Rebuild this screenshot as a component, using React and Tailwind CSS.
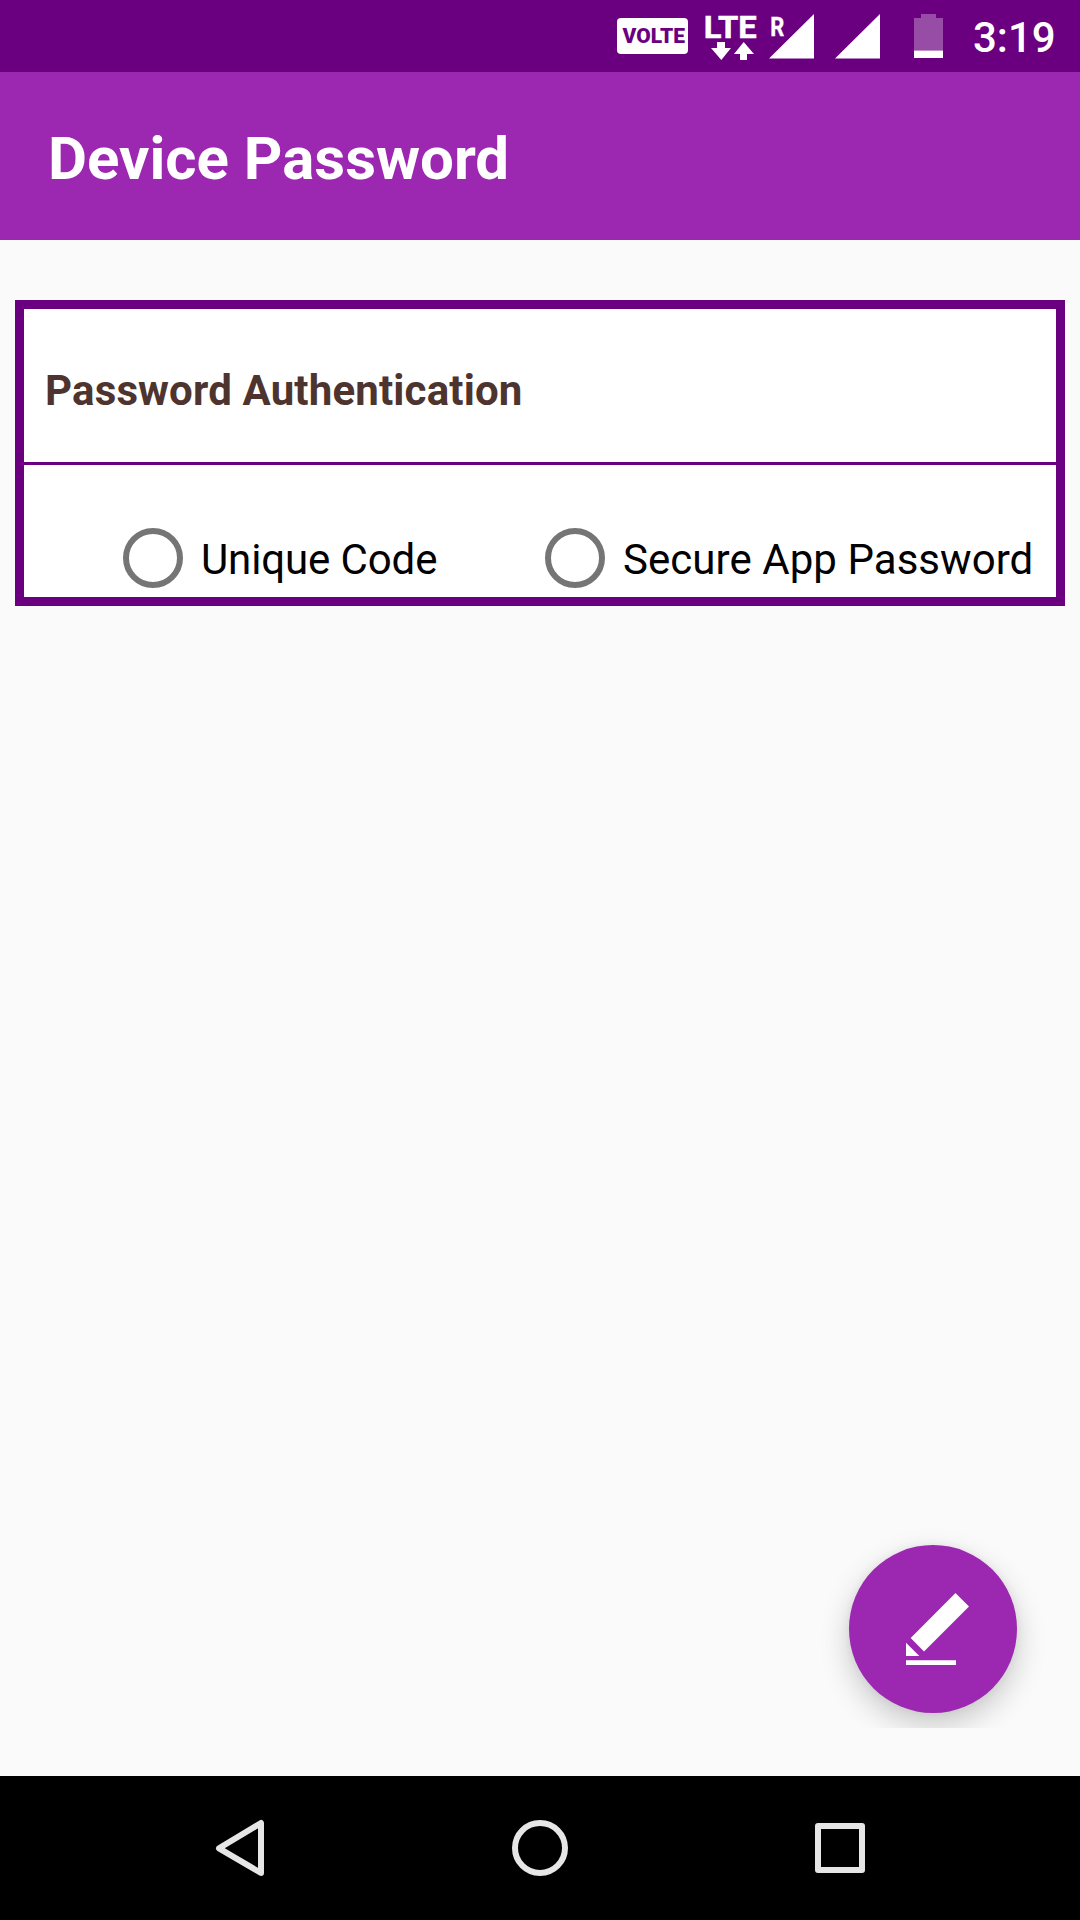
function StatusBar() {
  return (
    <header className="flex h-[72px] items-start bg-[#6a007f] text-white">
      <svg className="ml-[600px] h-[72px] w-[360px] shrink-0" viewBox="600 0 360 72" fill="#fff" fontFamily="Roboto, sans-serif">
        <rect x="617" y="18" width="71" height="36" rx="4" />
        <text x="622.5" y="43.3" fontSize="21" fontWeight="900" fill="#6a007f" textLength="62.5" lengthAdjust="spacingAndGlyphs">VOLTE</text>
        <text x="703.8" y="38" fontSize="32" fontWeight="700" stroke="#fff" strokeWidth="0.5" textLength="52.8" lengthAdjust="spacingAndGlyphs">LTE</text>
        <path d="M717 42h8v6h6L721.300 60 711 48h6zM740 60h7v-6h7L743.700 42 734 54h6z" />
        <text x="770.3" y="35.800" fontSize="25" fontWeight="700" stroke="#fff" strokeWidth="0.4" textLength="14" lengthAdjust="spacingAndGlyphs">R</text>
        <path d="M769 58.500 814 14v44.500zM835 58.500 880 14v44.500z" />
        <path fillOpacity="0.3" d="M921 14h15v4h7v32.500h-29V18h7z" />
        <path d="M914 50.500h29V58h-29z" />
      </svg>
      <time className="ml-[13px] mt-[13px] text-[42px] font-medium leading-[50px]">3:19</time>
    </header>
  );
}

function RadioOption({ label, tracking }) {
  return (
    <label className="flex items-center whitespace-nowrap">
      <span className="size-[60px] shrink-0 rounded-full border-[6px] border-[#757575]" />
      <span className={`ml-[18px] mt-[4px] text-[42px] leading-[50px] text-black ${tracking}`}>{label}</span>
    </label>
  );
}

function NavBar() {
  return (
    <nav className="grid h-[144px] grid-cols-3 place-items-center bg-black px-[90px]">
      <svg className="size-[72px]" viewBox="204 1812 72 72" fill="none" stroke="#e6e6e6" strokeWidth="6" strokeLinejoin="round">
        <path d="M261 1823v50l-42-24.700z" />
      </svg>
      <svg className="size-[72px]" viewBox="504 1812 72 72" fill="none" stroke="#e6e6e6" strokeWidth="6">
        <circle cx="540" cy="1848" r="25" />
      </svg>
      <svg className="size-[72px]" viewBox="804 1812 72 72" fill="none" stroke="#e6e6e6" strokeWidth="6" strokeLinejoin="round">
        <rect x="818" y="1826" width="44" height="44" />
      </svg>
    </nav>
  );
}

export default function App() {
  return (
    <div className="flex h-[1920px] w-[1080px] flex-col overflow-hidden bg-[#fafafa] font-['Roboto',sans-serif]">
      <StatusBar />
      <div className="flex h-[168px] items-center bg-[#9c27b0] pl-12">
        <h1 className="mt-[6px] text-[60px] font-bold leading-[70px] text-white">Device Password</h1>
      </div>
      <main className="flex flex-1 flex-col">
        <section className="mx-[15px] mt-[60px] h-[306px] border-[9px] border-[#6a007f] bg-white">
          <div className="flex h-[156px] items-center border-b-[3px] border-[#6a007f] pl-[21px]">
            <h2 className="mt-[11px] text-[42px] font-bold leading-[50px] tracking-[0.16px] text-[#4e342e]">Password Authentication</h2>
          </div>
          <div className="flex pl-[99px] pt-[63px]">
            <div className="w-[422px]">
              <RadioOption label="Unique Code" tracking="tracking-[-0.12px]" />
            </div>
            <RadioOption label="Secure App Password" tracking="tracking-[0.05px]" />
          </div>
        </section>
        <div className="mb-12 mt-auto flex justify-end overflow-hidden pb-[15px] pr-[63px] pt-10">
          <button className="size-[168px] rounded-full bg-[#9c27b0] shadow-[0_12px_30px_rgba(0,0,0,0.2),0_0_8px_rgba(0,0,0,0.06)]">
            <svg className="size-[168px]" viewBox="849 1545 168 168" fill="#fff">
              <path d="M955.500 1593 969 1606.500 924 1651.500 910.700 1638zM906 1642.700 919.300 1656H906zM906 1660.300h50v4.700h-50z" />
            </svg>
          </button>
        </div>
      </main>
      <NavBar />
    </div>
  );
}
